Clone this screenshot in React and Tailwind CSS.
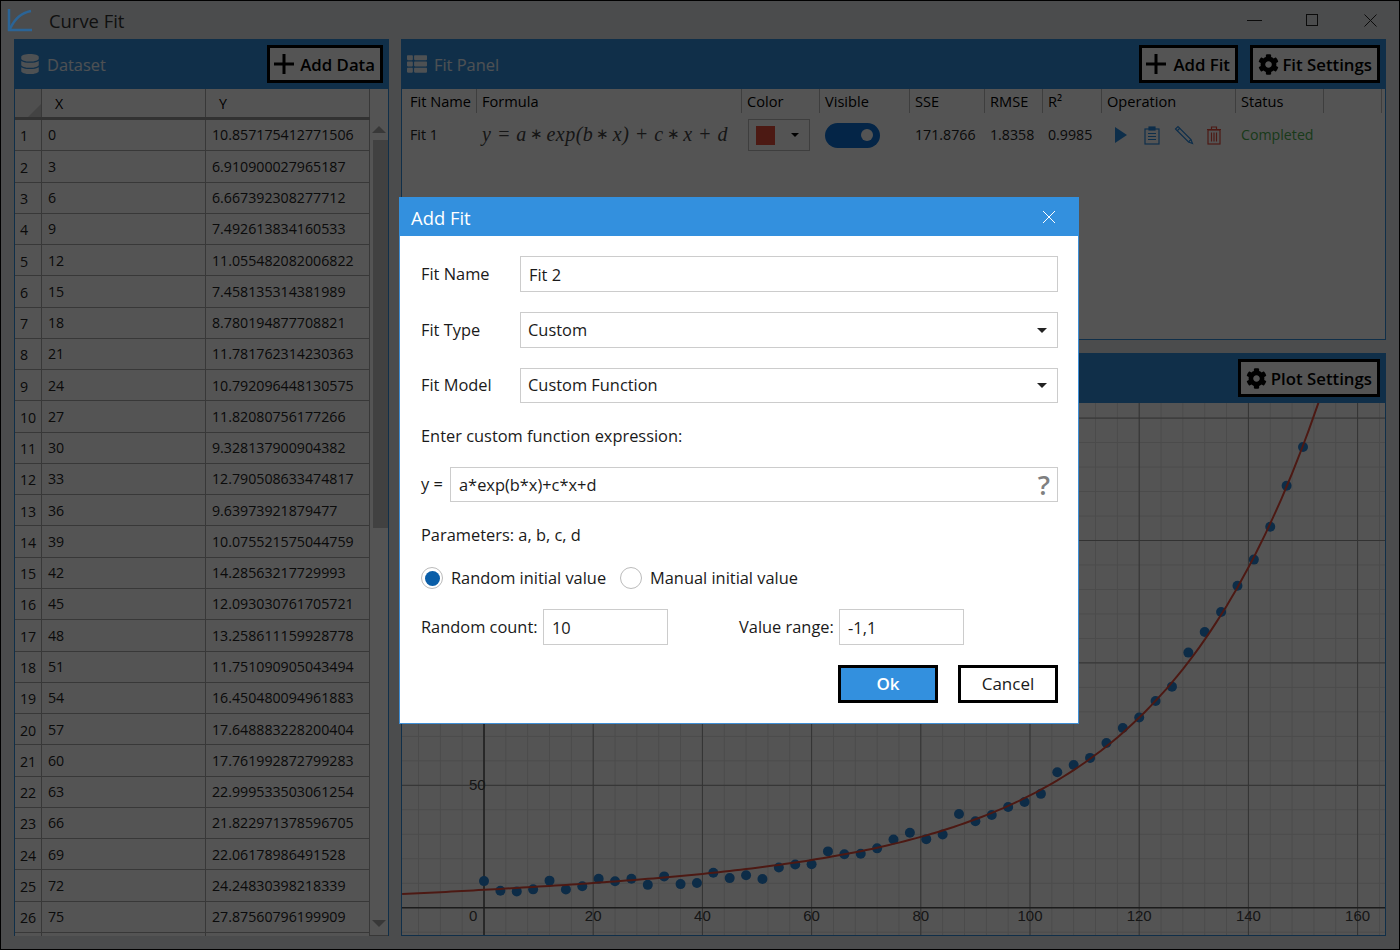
import { FaCog, FaDatabase, FaThList } from "react-icons/fa";

const yValues = [
  "10.857175412771506", "6.910900027965187", "6.667392308277712", "7.492613834160533",
  "11.055482082006822", "7.458135314381989", "8.780194877708821", "11.781762314230363",
  "10.792096448130575", "11.82080756177266", "9.328137900904382", "12.790508633474817",
  "9.63973921879477", "10.075521575044759", "14.28563217729993", "12.093030761705721",
  "13.258611159928778", "11.751090905043494", "16.450480094961883", "17.648883228200404",
  "17.761992872799283", "22.999533503061254", "21.822971378596705", "22.06178986491528",
  "24.24830398218339", "27.87560796199909",
];

// read off the picture, the table stops at x = 75
const moreY = [
  30.6, 28, 29.9, 38.3, 35.3, 37.9, 41.1, 43.2, 46.5, 55.3, 58.3, 61.2, 67.3, 73.4, 77.7, 84.4,
  90.3, 104.2, 112.6, 120.8, 131.5, 142.2, 155.6, 172.4, 188.2,
];

const points = [...yValues.map(Number), ...moreY].map((v, i) => [i * 3, v]);

const px = (u) => 484 + 5.46 * u;
const py = (v) => 907.7 - 2.448 * v;

const curve = [];
for (let u = -15; u <= 155; u += 1) {
  const v = Math.exp(0.0342 * u) + 0.09 * u + 6.3;
  curve.push(`${px(u).toFixed(1)},${py(v).toFixed(1)}`);
}

const fitCols = [
  "Fit Name", "Formula", "Color", "Visible", "SSE", "RMSE", "R²", "Operation", "Status", "",
];

const gridCols =
  "grid grid-cols-[75px_265px_78px_90px_75px_58px_59px_134px_88px_58px]";

function PlusIcon() {
  return (
    <svg width="22" height="22" viewBox="0 0 22 22" className="shrink-0">
      <path d="M9.5 1h3v8.5H21v3h-8.5V21h-3v-8.5H1v-3h8.5z" fill="#000" />
    </svg>
  );
}

function HeadButton({ icon, label, className }) {
  return (
    <button
      className={`flex h-[38px] items-center justify-between whitespace-nowrap border-[3px] border-black bg-white pl-[3px] pr-[5px] text-[16.8px] font-semibold text-black ${className}`}
    >
      {icon}
      <span className="pt-[1px]">{label}</span>
    </button>
  );
}

function PanelHead({ icon, title, children }) {
  return (
    <div className="flex h-[50px] items-center justify-between bg-[#3390de] pl-[6px] pr-[6px]">
      <div className="flex items-center gap-[7px] text-[16.4px] text-white/90">
        {icon}
        <span className="pt-[2px]">{title}</span>
      </div>
      <div className="flex items-center gap-[12px]">{children}</div>
    </div>
  );
}

function DataGrid() {
  return (
    <div className="flex h-[847px] border-x border-[#3390de] bg-white text-[14.2px] text-[#222]">
      <div className="flex w-[355px] flex-col overflow-hidden">
        <div className="flex h-[31px] shrink-0 border-b-[3px] border-[#999] font-medium text-black">
          <div className="relative w-[27px] border-r border-[#aaa] bg-[#eee]">
            <div className="absolute bottom-0 right-0 h-0 w-0 border-b-[13px] border-l-[13px] border-b-[#ccc] border-l-transparent" />
          </div>
          <div className="w-[164px] border-r border-[#aaa] pl-[13px] pt-[4px]">X</div>
          <div className="w-[164px] border-r border-[#aaa] pl-[13px] pt-[4px]">Y</div>
        </div>
        {yValues.map((y, i) => (
          <div key={i} className="flex h-[31.28px] shrink-0 border-b border-[#aaa]">
            <div className="flex w-[27px] items-center border-r border-[#aaa] pl-[5px] pt-[2px]">{i + 1}</div>
            <div className="flex w-[164px] items-center border-r border-[#aaa] pl-[6px]">{i * 3}</div>
            <div className="flex w-[164px] items-center border-r border-[#aaa] pl-[6px]">{y}</div>
          </div>
        ))}
        <div className="flex flex-1">
          <div className="w-[27px] border-r border-[#aaa]" />
          <div className="w-[164px] border-r border-[#aaa]" />
          <div className="w-[164px] border-r border-[#aaa]" />
        </div>
      </div>
      <div className="flex flex-1 flex-col items-center border-b border-[#aaa] pt-[37px]">
        <div className="h-0 w-0 border-x-[7px] border-b-[7px] border-x-transparent border-b-[#aaa]" />
        <div className="mt-[7px] ml-[2px] h-[388px] w-[15px] bg-[#c4c4c4]" />
        <div className="mt-auto mb-[8px] h-0 w-0 border-x-[7px] border-t-[7px] border-x-transparent border-t-[#aaa]" />
      </div>
    </div>
  );
}

function OpIcons() {
  return (
    <div className="flex items-center pl-[12px]">
      <svg width="14" height="18" viewBox="0 0 14 18" className="mr-[16px]">
        <path d="M1 1l12 8-12 8z" fill="#2a8be0" />
      </svg>
      <svg width="16" height="19" viewBox="0 0 16 19" fill="none" stroke="#2a8be0" strokeWidth="1.2" className="mr-[14px]">
        <rect x="1" y="3" width="14" height="15" />
        <rect x="5" y="1" width="6" height="3" fill="#2a8be0" />
        <path d="M4 7.5h8M4 10.5h8M4 13.5h8" />
      </svg>
      <svg width="20" height="20" viewBox="0 0 20 20" fill="none" stroke="#2a8be0" strokeWidth="1.2" className="mr-[12px]">
        <path d="M1.5 4L4 1.5 17 14.5 18.5 18.5 14.5 17z" />
        <path d="M3 6l3-3M14.5 17l2.5-2.5" />
      </svg>
      <svg width="16" height="19" viewBox="0 0 16 19" fill="none" stroke="#e74c3c" strokeWidth="1.2">
        <rect x="2" y="4" width="12" height="14" />
        <path d="M1 3.5h14M5.5 3.5V1h5v2.5M5.5 6.5v9M8 6.5v9M10.5 6.5v9" />
      </svg>
    </div>
  );
}

function Star() {
  return <span className="px-[3px] align-[2px] text-[15px] not-italic">∗</span>;
}

function FitTable() {
  const cell = "flex items-center";
  return (
    <div className="h-[251px] border-x border-b border-[#3390de] bg-white text-[14.2px] text-[#222]">
      <div className={`${gridCols} h-[30px] text-[14.6px] font-medium text-black`}>
        {fitCols.map((c, i) => (
          <div key={i} className={`h-[24px] border-r border-[#bbb] pt-[2px] ${i === 0 ? "pl-[8px]" : "pl-[5px]"}`}>
            {c}
          </div>
        ))}
      </div>
      <div className={`${gridCols} h-[32px]`}>
        <div className={`${cell} pl-[8px]`}>Fit 1</div>
        <div className="whitespace-pre pl-[5px] font-['Liberation_Serif',serif] text-[20px] italic tracking-[0.5px] text-[#444]">
          y = a<Star />exp(b<Star />x) + c<Star />x + d
        </div>
        <div className={`${cell} pl-[6px]`}>
          <div className="flex h-[32px] w-[62px] items-center border border-[#bbb] pl-[7px]">
            <div className="h-[19px] w-[19px] bg-[#e74c3c]" />
            <div className="ml-[16px] h-0 w-0 border-x-[4px] border-t-[4px] border-x-transparent border-t-black" />
          </div>
        </div>
        <div className={`${cell} pl-[5px]`}>
          <div className="flex h-[25px] w-[55px] items-center justify-end rounded-full bg-[#0f72d6] pr-[7px]">
            <div className="h-[12px] w-[12px] rounded-full bg-white" />
          </div>
        </div>
        <div className={`${cell} pl-[5px]`}>171.8766</div>
        <div className={`${cell} pl-[5px]`}>1.8358</div>
        <div className={`${cell} pl-[5px]`}>0.9985</div>
        <OpIcons />
        <div className={`${cell} pl-[5px] text-[#4caf50]`}>Completed</div>
        <div />
      </div>
    </div>
  );
}

function Chart() {
  const minorX = [];
  for (let u = -16; u <= 164; u += 4) minorX.push(u);
  const minorY = [];
  for (let v = -10; v <= 210; v += 10) minorY.push(v);
  const majorX = [20, 40, 60, 80, 100, 120, 140, 160];
  const majorY = [50, 100, 150, 200];
  const labels = [20, 40, 60, 80, 100, 120, 140, 160];
  return (
    <div className="h-[533px] border-x border-b border-[#3390de] bg-white">
      <svg viewBox="402 403 983 532" className="block h-[532px] w-[983px]">
        {minorX.map((u) => (
          <line key={u} x1={px(u)} x2={px(u)} y1="403" y2="935" stroke="#e2e2e2" />
        ))}
        {minorY.map((v) => (
          <line key={v} y1={py(v)} y2={py(v)} x1="402" x2="1385" stroke="#e2e2e2" />
        ))}
        {majorX.map((u) => (
          <line key={u} x1={px(u)} x2={px(u)} y1="403" y2="935" stroke="#999" />
        ))}
        {majorY.map((v) => (
          <line key={v} y1={py(v)} y2={py(v)} x1="402" x2="1385" stroke="#999" />
        ))}
        <line x1="484" x2="484" y1="403" y2="935" stroke="#555" strokeWidth="1.5" />
        <line x1="402" x2="1385" y1="907.7" y2="907.7" stroke="#555" strokeWidth="1.5" />
        <g fontFamily="Liberation Sans, sans-serif" fontSize="15" fill="#444">
          <text x="469" y="790">50</text>
          <text x="469" y="921">0</text>
          {labels.map((u) => (
            <text key={u} x={px(u)} y="921" textAnchor="middle">{u}</text>
          ))}
        </g>
        {points.map(([u, v]) => (
          <circle key={u} cx={px(u)} cy={py(v)} r="5" fill="#2a85d7" />
        ))}
        <polyline points={curve.join(" ")} fill="none" stroke="#e74c3c" strokeWidth="2" />
      </svg>
    </div>
  );
}

function TextBox({ value, className }) {
  return (
    <input
      readOnly
      value={value}
      className={`h-full border border-[#ccc] bg-white pl-[8px] outline-none ${className}`}
    />
  );
}

function SelectBox({ value }) {
  return (
    <div className="flex h-full flex-1 items-center justify-between border border-[#ccc] pl-[7px] pr-[10px]">
      <span>{value}</span>
      <div className="h-0 w-0 border-x-[5px] border-t-[5px] border-x-transparent border-t-[#222]" />
    </div>
  );
}

function Radio({ checked }) {
  return (
    <div className="flex h-[22px] w-[22px] items-center justify-center rounded-full border border-[#bbb]">
      {checked && <div className="h-[15px] w-[15px] rounded-full bg-[#0a5ea8]" />}
    </div>
  );
}

function AddFitDialog() {
  return (
    <div className="absolute left-[398px] top-[196px] h-[527px] w-[680px] border border-t-0 border-[#3f8fd6] bg-white text-[16.4px] text-[#1a1a1a]">
      <div className="-mx-px flex h-[39px] items-center justify-between bg-[#3390de] pl-[12px] pr-[23px] pt-[3px] text-[18.4px] text-white">
        <span>Add Fit</span>
        <svg width="14" height="14" viewBox="0 0 14 14" stroke="#fff" strokeWidth="1" className="-mt-[3px]">
          <path d="M1 1l12 12M13 1L1 13" />
        </svg>
      </div>
      <div className="pl-[21px] pr-[20px] pt-[20px]">
        <div className="flex h-[36px] items-center">
          <span className="w-[99px]">Fit Name</span>
          <TextBox value="Fit 2" className="flex-1" />
        </div>
        <div className="mt-[20px] flex h-[36px] items-center">
          <span className="w-[99px]">Fit Type</span>
          <SelectBox value="Custom" />
        </div>
        <div className="mt-[20px] flex h-[35px] items-center">
          <span className="w-[99px]">Fit Model</span>
          <SelectBox value="Custom Function" />
        </div>
        <div className="mt-[21px] flex h-[24px] items-center">Enter custom function expression:</div>
        <div className="mt-[19px] flex h-[35px] items-center">
          <span className="w-[29px]">y =</span>
          <div className="relative h-full flex-1">
            <TextBox value="a*exp(b*x)+c*x+d" className="w-full" />
            <span className="absolute right-[8px] -top-[2px] text-[27px] font-semibold text-[#808080]">?</span>
          </div>
        </div>
        <div className="mt-[21px] flex h-[24px] items-center">Parameters: a, b, c, d</div>
        <div className="mt-[19px] flex h-[24px] items-center">
          <Radio checked />
          <span className="ml-[8px] w-[169px]">Random initial value</span>
          <Radio />
          <span className="ml-[8px]">Manual initial value</span>
        </div>
        <div className="mt-[19px] flex h-[36px] items-center">
          <span className="w-[122px]">Random count:</span>
          <TextBox value="10" className="w-[125px]" />
          <span className="ml-[71px] w-[100px]">Value range:</span>
          <TextBox value="-1,1" className="w-[125px]" />
        </div>
        <div className="mt-[20px] flex h-[38px] justify-end gap-[20px] text-[17px]">
          <button className="w-[100px] border-[3px] border-black bg-[#3390de] font-semibold text-white">Ok</button>
          <button className="w-[100px] border-[3px] border-black bg-white font-medium">Cancel</button>
        </div>
      </div>
    </div>
  );
}

export default function App() {
  return (
    <div className="relative h-[950px] w-[1400px] overflow-hidden border border-black bg-[#e3e6e8] font-['Open_Sans',sans-serif]">
      <div className="flex h-[38px] items-center justify-between">
        <div className="flex items-center">
          {/* keeps its colour above the dimming layer */}
          <svg width="26" height="24" viewBox="0 0 26 24" fill="none" stroke="#2b6496" strokeWidth="2.5" className="relative z-10 ml-[6px]">
            <path d="M2 1v21h23" />
            <path d="M3 21C7 12 13 5 24 3" />
          </svg>
          <span className="ml-[16px] pt-[2px] text-[18.4px] text-[#333]">Curve Fit</span>
        </div>
        <div className="flex items-center pr-[22px]">
          <div className="h-px w-[15px] bg-[#222]" />
          <div className="ml-[44px] h-[12px] w-[12px] border border-[#222]" />
          <svg width="13" height="13" viewBox="0 0 13 13" stroke="#222" strokeWidth="1" className="ml-[46px]">
            <path d="M0.5 0.5l12 12M12.5 0.5l-12 12" />
          </svg>
        </div>
      </div>
      <div className="flex gap-[12px] pl-[13px]">
        <div className="w-[375px]">
          <PanelHead icon={<FaDatabase size={20} />} title="Dataset">
            <HeadButton icon={<PlusIcon />} label="Add Data" className="w-[116px]" />
          </PanelHead>
          <DataGrid />
        </div>
        <div className="w-[985px]">
          <PanelHead icon={<FaThList size={20} />} title="Fit Panel">
            <HeadButton icon={<PlusIcon />} label="Add Fit" className="w-[99px]" />
            <HeadButton icon={<FaCog size={21} color="#000" className="ml-[2px]" />} label="Fit Settings" className="w-[130px]" />
          </PanelHead>
          <FitTable />
          <div className="mt-[13px]">
            <PanelHead title="">
              <HeadButton icon={<FaCog size={21} color="#000" className="ml-[2px]" />} label="Plot Settings" className="w-[142px]" />
            </PanelHead>
            <Chart />
          </div>
        </div>
      </div>
      <div className="absolute inset-0 bg-black/[.67]" />
      <AddFitDialog />
    </div>
  );
}
